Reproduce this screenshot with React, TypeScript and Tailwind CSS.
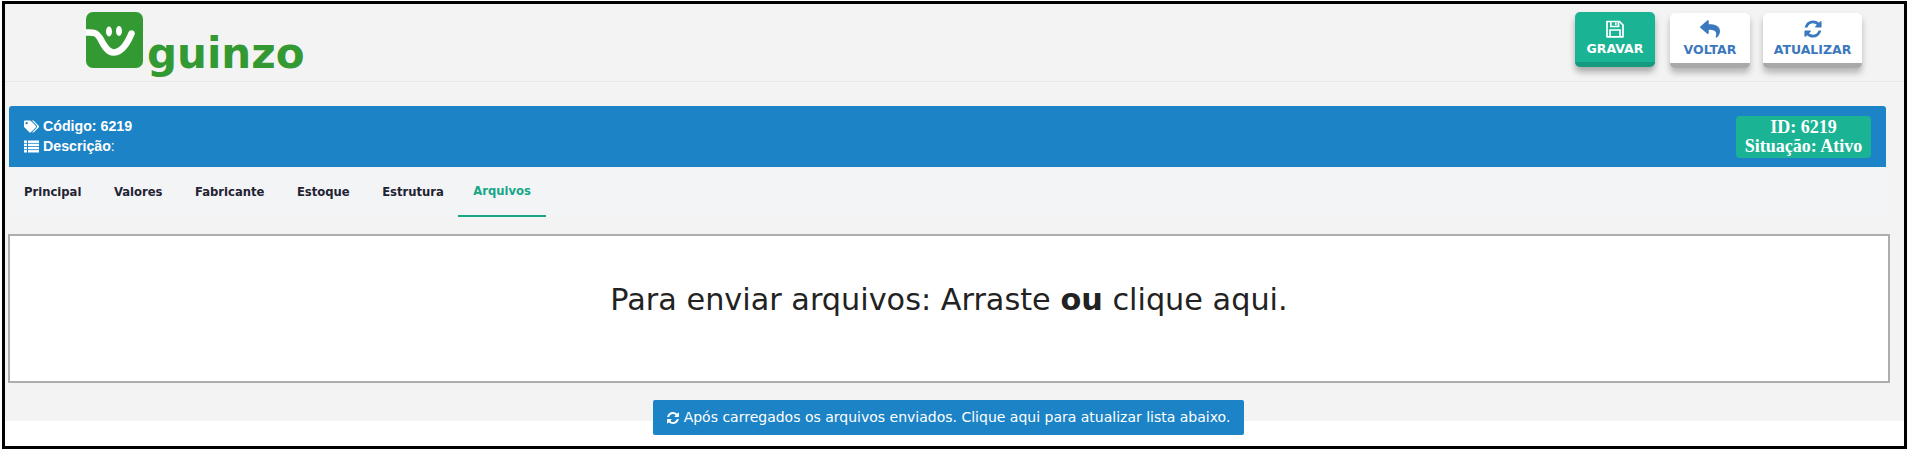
import React from 'react';
import { FaReply, FaTags } from 'react-icons/fa';

const dejavu = "font-['DejaVu_Sans',sans-serif]";

function Logo() {
  return (
    <svg width="57" height="56" viewBox="0 0 57 56" className="shrink-0">
      <rect width="57" height="56" rx="7" fill="#339933" />
      <path d="M0 20.5 C9 20 11 21 14 26 C18 34 22 41 28 40.5 C36 40 42 30 45.5 21.5" fill="none" stroke="#fff" strokeWidth="6.5" strokeLinecap="round" />
      <ellipse cx="23" cy="19.5" rx="3" ry="5" fill="#fff" />
      <ellipse cx="33" cy="19" rx="3" ry="5" fill="#fff" />
    </svg>
  );
}

function RefreshIcon({ size }: { size: number }) {
  return (
    <svg width={size} height={size} viewBox="0 0 1792 1792" fill="currentColor" className="shrink-0">
      <path d="M1639 1056q0 5-1 7-64 268-268 434.5t-478 166.5q-146 0-282.5-55t-243.5-157l-129 129q-19 19-45 19t-45-19-19-45v-448q0-26 19-45t45-19h448q26 0 45 19t19 45-19 45l-137 137q71 66 161 102t187 36q134 0 250-65t186-179q11-17 53-117 8-23 30-23h192q13 0 22.5 9.5t9.5 22.5zm25-800v448q0 26-19 45t-45 19h-448q-26 0-45-19t-19-45 19-45l138-138q-148-137-349-137-134 0-250 65t-186 179q-11 17-53 117-8 23-30 23h-199q-13 0-22.5-9.5t-9.5-22.5v-7q65-268 270-434.5t480-166.5q146 0 284 55.5t245 156.5l130-129q19-19 45-19t45 19 19 45z" />
    </svg>
  );
}

function SaveIcon() {
  return (
    <svg width="18" height="18" viewBox="0 0 18 18" fill="none" stroke="currentColor" strokeWidth="1.7" className="shrink-0">
      <path d="M1 1.5 H13.5 L17 5 V16.8 H1 Z" strokeLinejoin="round" />
      <path d="M4.8 1.5 V6.5 H12.5 V1.5" />
      <path d="M9.8 2.5 V5" />
      <path d="M4 16.8 V10 H14 V16.8" />
    </svg>
  );
}

function ListIcon() {
  return (
    <svg width="15" height="13" viewBox="0 0 15 13" fill="currentColor" className="shrink-0">
      <rect x="0" y="0.5" width="3" height="2.4" />
      <rect x="4" y="0.5" width="11" height="2.4" />
      <rect x="0" y="3.7" width="3" height="2.4" />
      <rect x="4" y="3.7" width="11" height="2.4" />
      <rect x="0" y="6.9" width="3" height="2.4" />
      <rect x="4" y="6.9" width="11" height="2.4" />
      <rect x="0" y="10.1" width="3" height="2.4" />
      <rect x="4" y="10.1" width="11" height="2.4" />
    </svg>
  );
}

export default function App() {
  const tabs = ['Principal', 'Valores', 'Fabricante', 'Estoque', 'Estrutura'];

  return (
    <div className="h-screen w-full overflow-hidden bg-white pl-[2px] pr-[1px] pt-[1px]">
      <div className="h-[448px] overflow-hidden border-[3px] border-black bg-white">

        {/* top bar */}
        <header className="flex h-[78px] items-start justify-between border-b border-[#e7e7e7] bg-[#f3f3f3] pl-[81px] pr-[42px]">
          <div className="mt-[8px] flex items-start">
            <Logo />
            <span className={`${dejavu} ml-[4px] mt-[19px] text-[42px] font-bold leading-[46px] text-[#339933]`}>guinzo</span>
          </div>
          <div className={`${dejavu} mt-[8px] flex items-start text-[12.5px] font-bold`}>
            <button className="flex h-[55px] w-[80px] flex-col items-center rounded-[5px] border-b-[5px] border-[#159a80] bg-[#1ab394] pt-[8px] text-white shadow-[0_5px_6px_rgba(0,0,0,0.3)]">
              <SaveIcon />
              <span className="mt-[3px] leading-[15px]">GRAVAR</span>
            </button>
            <button className="ml-[15px] mt-[1px] flex h-[55px] w-[80px] flex-col items-center rounded-[5px] border-b-[5px] border-[#a9a9a9] bg-white pt-[6px] text-[#3b78bd] shadow-[0_5px_6px_rgba(0,0,0,0.25)]">
              <FaReply size={20} />
              <span className="mt-[3px] leading-[15px]">VOLTAR</span>
            </button>
            <button className="ml-[13px] mt-[1px] flex h-[55px] w-[99px] flex-col items-center rounded-[5px] border-b-[5px] border-[#a9a9a9] bg-white pt-[6px] text-[#3b78bd] shadow-[0_5px_6px_rgba(0,0,0,0.25)]">
              <RefreshIcon size={20} />
              <span className="mt-[3px] leading-[15px]">ATUALIZAR</span>
            </button>
          </div>
        </header>

        <section className="h-[339px] bg-[#f3f3f3] pt-[24px]">
          {/* record info */}
          <div className="mx-[4px] mr-[18px] flex h-[61px] items-start justify-between rounded-t-[3px] bg-[#1c83c6] pl-[15px] pr-[15px] pt-[10px]">
            <div className="font-['Liberation_Sans',sans-serif] text-[14.2px] font-bold leading-[20px] text-white">
              <div className="flex items-center gap-[4px]"><FaTags size={15} />Código: 6219</div>
              <div className="flex items-center gap-[4px]"><ListIcon /><span>Descrição<span className="font-normal">:</span></span></div>
            </div>
            <div className="flex h-[42px] w-[135px] flex-col items-center justify-center rounded-[4px] bg-[#1ab394] font-['Liberation_Serif',serif] text-[18px] font-bold leading-[19px] text-white">
              <div>ID: 6219</div>
              <div>Situação: Ativo</div>
            </div>
          </div>

          {/* tabs */}
          <nav className={`${dejavu} mx-[4px] mr-[18px] flex h-[50px] bg-[#f3f4f6] text-[11.6px] font-bold text-[#1f2333]`}>
            {tabs.map((t) => (
              <a key={t} className="mr-[2.5px] flex h-[50px] items-center px-[15px] pt-[1px]">{t}</a>
            ))}
            <a className="-ml-[3px] flex h-[50px] items-center border-b-2 border-[#18a689] px-[15px] pt-[1px] text-[#18a689]">Arquivos</a>
          </nav>

          <div className="mx-[3px] mr-[14px] mt-[17px] flex h-[149px] items-center justify-center border-2 border-[#adadad] bg-white">
            <p className={`${dejavu} mb-[18px] text-[30.3px] text-[#222]`}>Para enviar arquivos: Arraste <b>ou</b> clique aqui.</p>
          </div>

          <div className="mt-[17px] flex justify-center pr-[13px]">
            <button className={`${dejavu} flex h-[35px] w-[591px] items-center justify-center gap-[4px] rounded-[2px] bg-[#1c83c6] text-[14px] text-white`}>
              <RefreshIcon size={14} />
              Após carregados os arquivos enviados. Clique aqui para atualizar lista abaixo.
            </button>
          </div>
        </section>
      </div>
    </div>
  );
}
